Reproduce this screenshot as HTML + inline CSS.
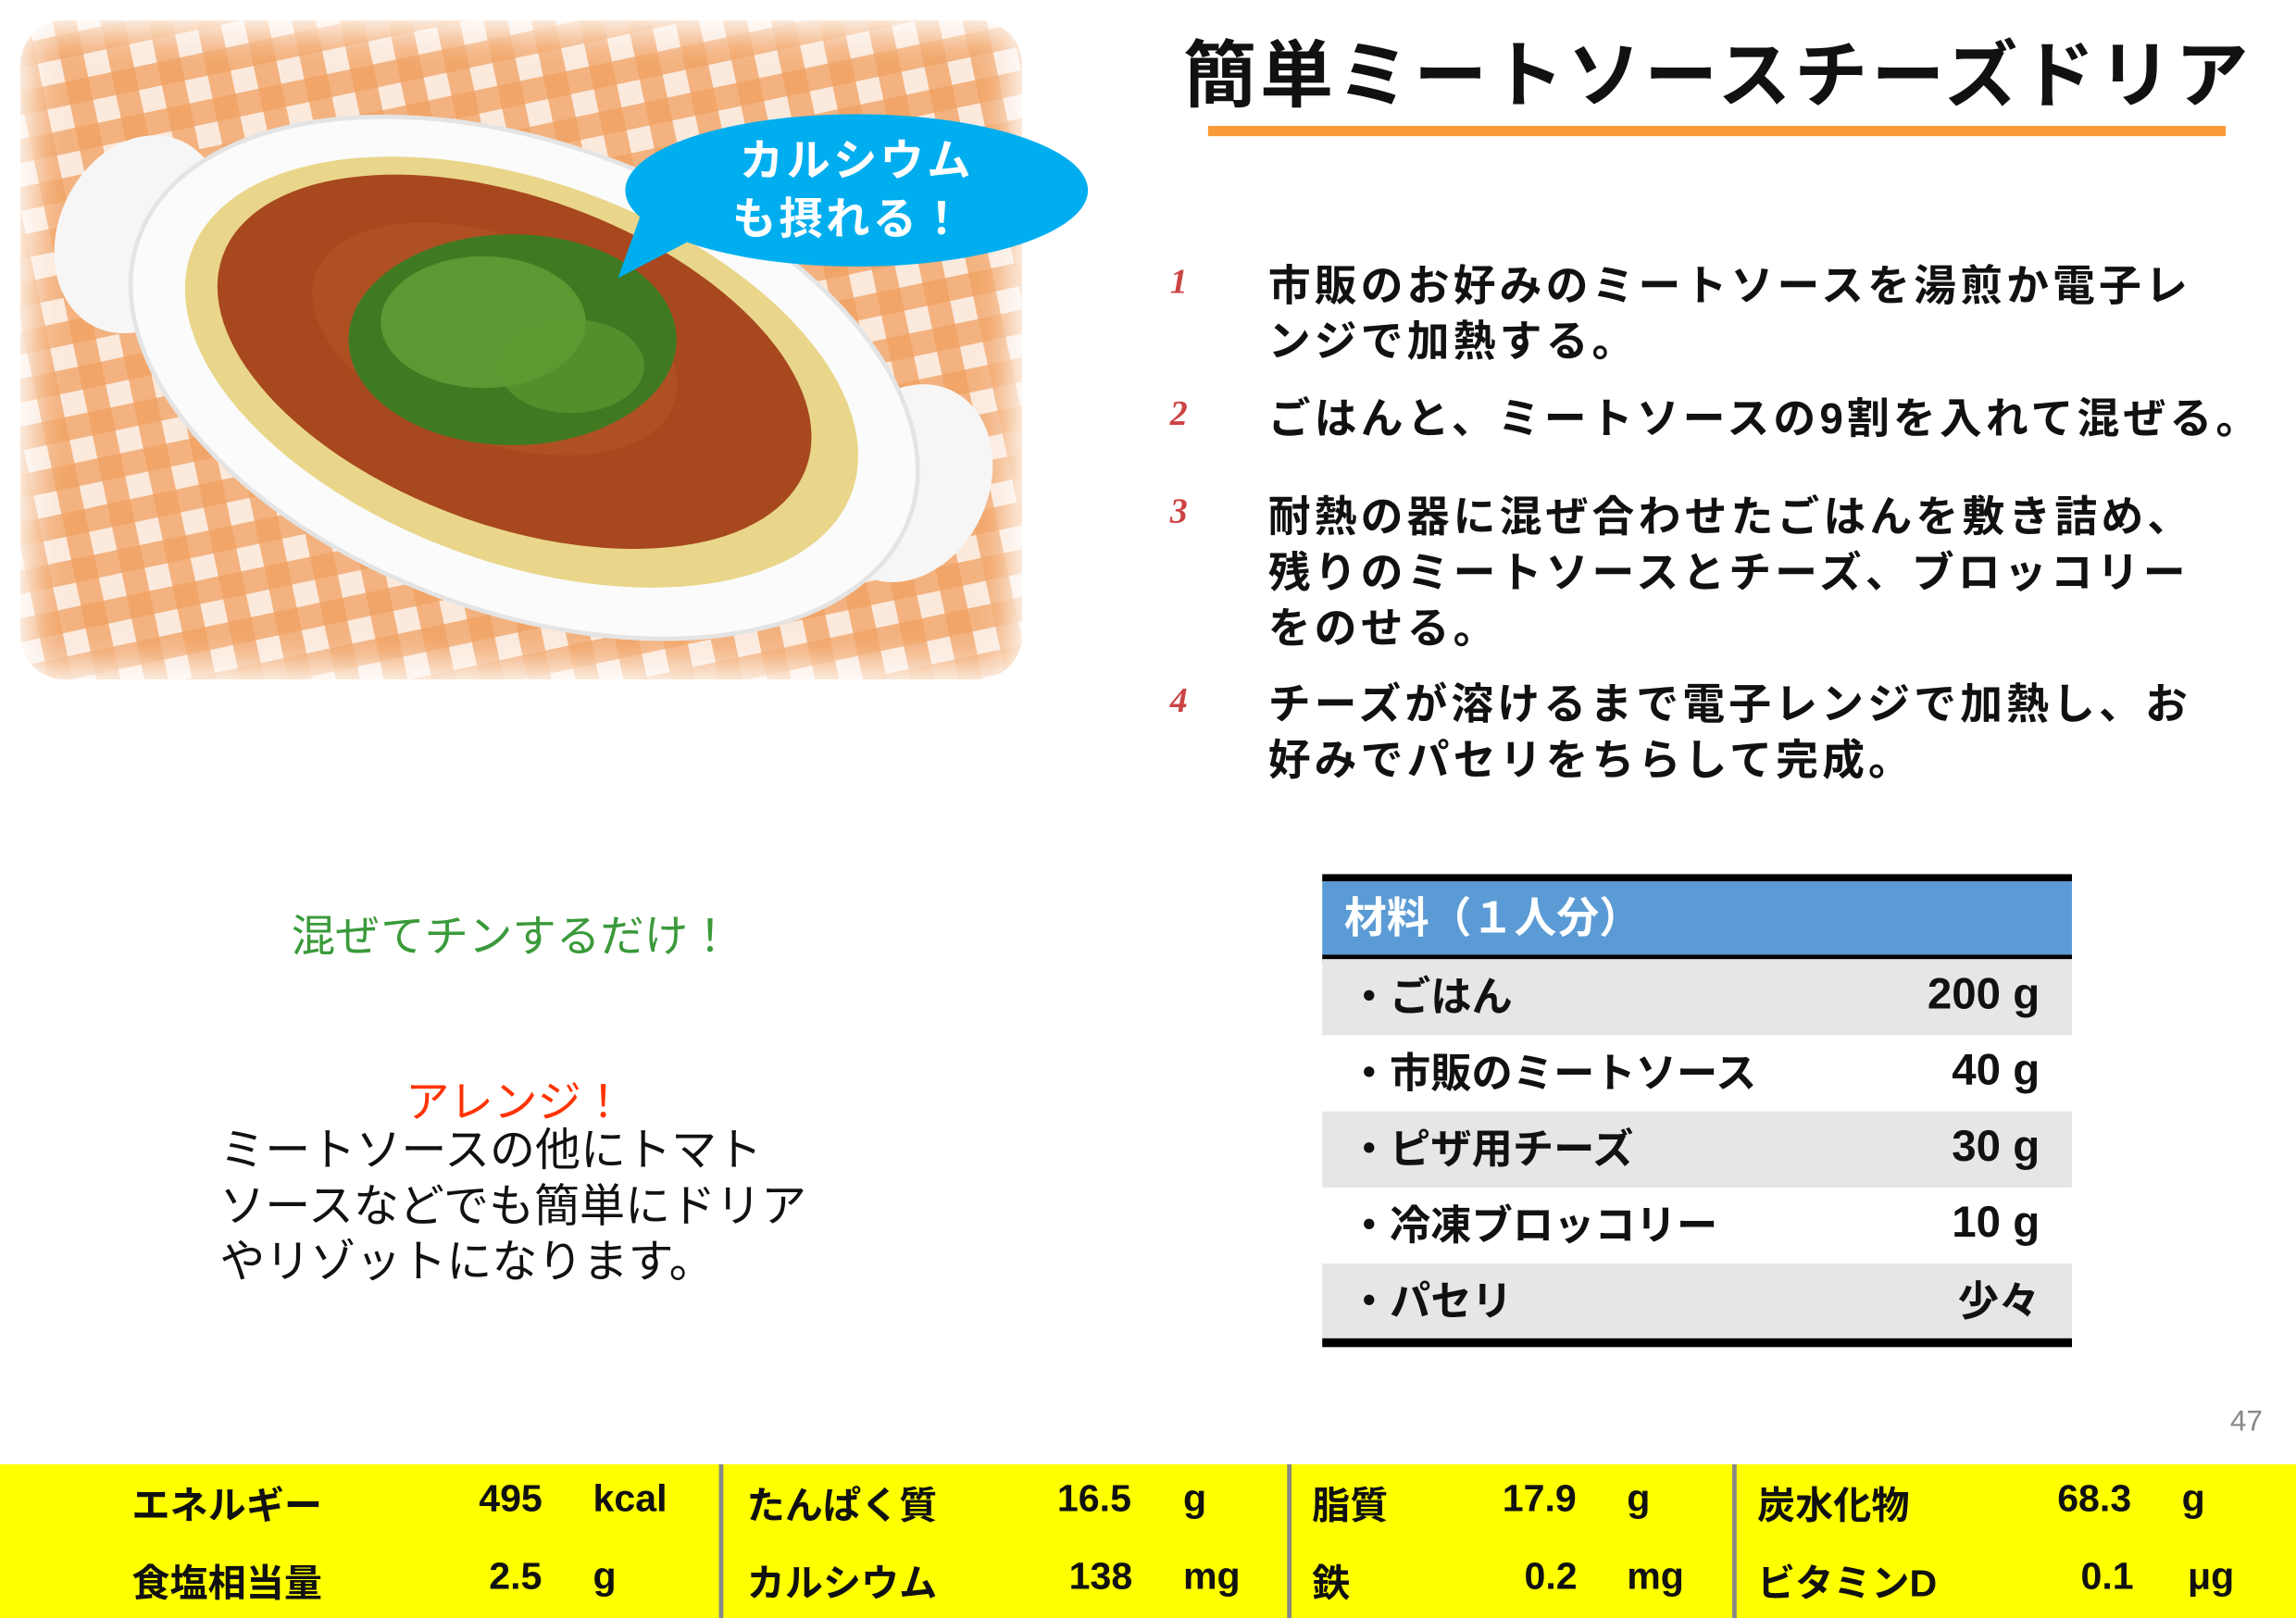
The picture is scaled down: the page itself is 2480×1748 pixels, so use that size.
<!DOCTYPE html>
<html><head><meta charset="utf-8"><style>
*{margin:0;padding:0;box-sizing:border-box}
html,body{width:2480px;height:1748px;overflow:hidden;background:#fff}
#w{position:absolute;left:0;top:0;width:1568px;height:1105px;transform:scale(1.58163,1.58190);transform-origin:0 0;font-family:"Liberation Sans","Noto Sans CJK JP",sans-serif}
.a{position:absolute;white-space:nowrap}
.b{font-weight:bold}
.st{position:absolute;left:866px;font-size:29px;font-weight:bold;line-height:38px;color:#111;letter-spacing:2.6px}
.n{position:absolute;left:799px;font-size:24px;font-weight:bold;font-style:italic;color:#cc4444;font-family:"Liberation Serif",serif}
.row{position:absolute;left:903px;width:512px;height:52px;font-size:28px;font-weight:bold;color:#111}
.row span{position:absolute;top:50%;transform:translateY(-54%)}
.y{position:absolute;font-size:26px;font-weight:bold;color:#111}
</style></head><body><div id="w">
<svg class="a" style="left:0;top:0" width="760" height="480" viewBox="0 0 760 480">
<defs>
<pattern id="g" width="32" height="32" patternUnits="userSpaceOnUse" patternTransform="rotate(-12)">
<rect width="32" height="32" fill="#fbe9dc"/>
<rect width="16" height="32" fill="#f0a060" opacity=".75"/>
<rect width="32" height="16" fill="#f0a060" opacity=".75"/>
</pattern>
<filter id="bl"><feGaussianBlur stdDeviation="12"/></filter>
</defs>
<rect x="14" y="14" width="684" height="450" rx="30" fill="url(#g)"/>
<rect x="6" y="6" width="700" height="466" fill="none" stroke="#fff" stroke-width="30" filter="url(#bl)"/>
<ellipse cx="95" cy="160" rx="55" ry="70" fill="#f6f6f6" transform="rotate(25 95 160)"/>
<ellipse cx="620" cy="330" rx="55" ry="70" fill="#f6f6f6" transform="rotate(25 620 330)"/>
<g transform="rotate(20 358 258)">
<ellipse cx="358" cy="258" rx="280" ry="160" fill="#fbfbfb" stroke="#e4e4e4" stroke-width="3"/>
<ellipse cx="355" cy="255" rx="240" ry="130" fill="#e9d68a"/>
<ellipse cx="348" cy="250" rx="212" ry="112" fill="#a8481e"/>
<ellipse cx="330" cy="240" rx="130" ry="70" fill="#b45626" opacity=".6"/>
</g>
<ellipse cx="350" cy="232" rx="112" ry="72" fill="#3f7a22"/>
<ellipse cx="330" cy="220" rx="70" ry="45" fill="#6aa63a" opacity=".7"/>
<ellipse cx="390" cy="250" rx="50" ry="32" fill="#5c9a30" opacity=".7"/>
<path d="M422 190 L470 165 L440 140 Z" fill="#00aeef"/>
<ellipse cx="585" cy="130" rx="158" ry="52" fill="#00aeef"/>
<text x="585" y="120" font-size="30" font-weight="bold" fill="#fff" text-anchor="middle" font-family="Liberation Sans,Noto Sans CJK JP,sans-serif" letter-spacing="2">カルシウム</text>
<text x="580" y="160" font-size="30" font-weight="bold" fill="#fff" text-anchor="middle" font-family="Liberation Sans,Noto Sans CJK JP,sans-serif" letter-spacing="2">も摂れる！</text>
</svg>
<div class="a b" style="left:808px;top:12px;font-size:50px;letter-spacing:2.5px;color:#111">簡単ミートソースチーズドリア</div>
<div class="a" style="left:825px;top:86px;width:695px;height:7px;background:#f99a38"></div>
<div class="n" style="top:180px">1</div>
<div class="st" style="top:177px">市販のお好みのミートソースを湯煎か電子レ<br>ンジで加熱する。</div>
<div class="n" style="top:270px">2</div>
<div class="st" style="top:268px">ごはんと、ミートソースの9割を入れて混ぜる。</div>
<div class="n" style="top:337px">3</div>
<div class="st" style="top:335px">耐熱の器に混ぜ合わせたごはんを敷き詰め、<br>残りのミートソースとチーズ、ブロッコリー<br>をのせる。</div>
<div class="n" style="top:466px">4</div>
<div class="st" style="top:463px">チーズが溶けるまで電子レンジで加熱し、お<br>好みでパセリをちらして完成。</div>
<div class="a" style="left:199px;top:615px;font-size:30px;color:#3a9a3a">混ぜてチンするだけ！</div>
<div class="a" style="left:277px;top:728px;font-size:30px;color:#ff3300">アレンジ！</div>
<div class="a" style="left:150px;top:767px;font-size:31px;line-height:38px;color:#111">ミートソースの他にトマト<br>ソースなどでも簡単にドリア<br>やリゾットになります。</div>
<div class="a" style="left:903px;top:597px;width:512px;height:5px;background:#000"></div>
<div class="a" style="left:903px;top:602px;width:512px;height:50px;background:#5b9bd5"></div>
<div class="a b" style="left:918px;top:604px;font-size:29px;color:#fff">材料（１人分）</div>
<div class="a" style="left:903px;top:652px;width:512px;height:5px;background:#000"></div>
<div class="row" style="top:655px;background:#e6e6e6"><span style="left:18px">・ごはん</span><span style="right:22px;font-size:30px">200 g</span></div>
<div class="row" style="top:707px"><span style="left:18px">・市販のミートソース</span><span style="right:22px;font-size:30px">40 g</span></div>
<div class="row" style="top:759px;background:#e6e6e6"><span style="left:18px">・ピザ用チーズ</span><span style="right:22px;font-size:30px">30 g</span></div>
<div class="row" style="top:811px"><span style="left:18px">・冷凍ブロッコリー</span><span style="right:22px;font-size:30px">10 g</span></div>
<div class="row" style="top:863px;background:#e6e6e6"><span style="left:18px">・パセリ</span><span style="right:22px">少々</span></div>
<div class="a" style="left:903px;top:914px;width:512px;height:6px;background:#000"></div>
<div class="a" style="left:1523px;top:960px;font-size:20px;color:#888">47</div>
<div class="a" style="left:0;top:1000px;width:1568px;height:105px;background:#ffff00"></div>
<div class="a" style="left:491px;top:1000px;width:3px;height:105px;background:#888"></div>
<div class="a" style="left:879px;top:1000px;width:3px;height:105px;background:#888"></div>
<div class="a" style="left:1183px;top:1000px;width:3px;height:105px;background:#888"></div>
<div class="y" style="left:90px;top:1008px">エネルギー</div><div class="y" style="left:327px;top:1008px">495</div><div class="y" style="left:405px;top:1008px">kcal</div>
<div class="y" style="left:90px;top:1061px">食塩相当量</div><div class="y" style="left:334px;top:1061px">2.5</div><div class="y" style="left:405px;top:1061px">g</div>
<div class="y" style="left:510px;top:1008px">たんぱく質</div><div class="y" style="left:722px;top:1008px">16.5</div><div class="y" style="left:808px;top:1008px">g</div>
<div class="y" style="left:510px;top:1061px">カルシウム</div><div class="y" style="left:730px;top:1061px">138</div><div class="y" style="left:808px;top:1061px">mg</div>
<div class="y" style="left:896px;top:1008px">脂質</div><div class="y" style="left:1026px;top:1008px">17.9</div><div class="y" style="left:1111px;top:1008px">g</div>
<div class="y" style="left:896px;top:1061px">鉄</div><div class="y" style="left:1041px;top:1061px">0.2</div><div class="y" style="left:1111px;top:1061px">mg</div>
<div class="y" style="left:1200px;top:1008px">炭水化物</div><div class="y" style="left:1405px;top:1008px">68.3</div><div class="y" style="left:1490px;top:1008px">g</div>
<div class="y" style="left:1200px;top:1061px">ビタミンD</div><div class="y" style="left:1421px;top:1061px">0.1</div><div class="y" style="left:1494px;top:1061px">μg</div>
</div></body></html>
